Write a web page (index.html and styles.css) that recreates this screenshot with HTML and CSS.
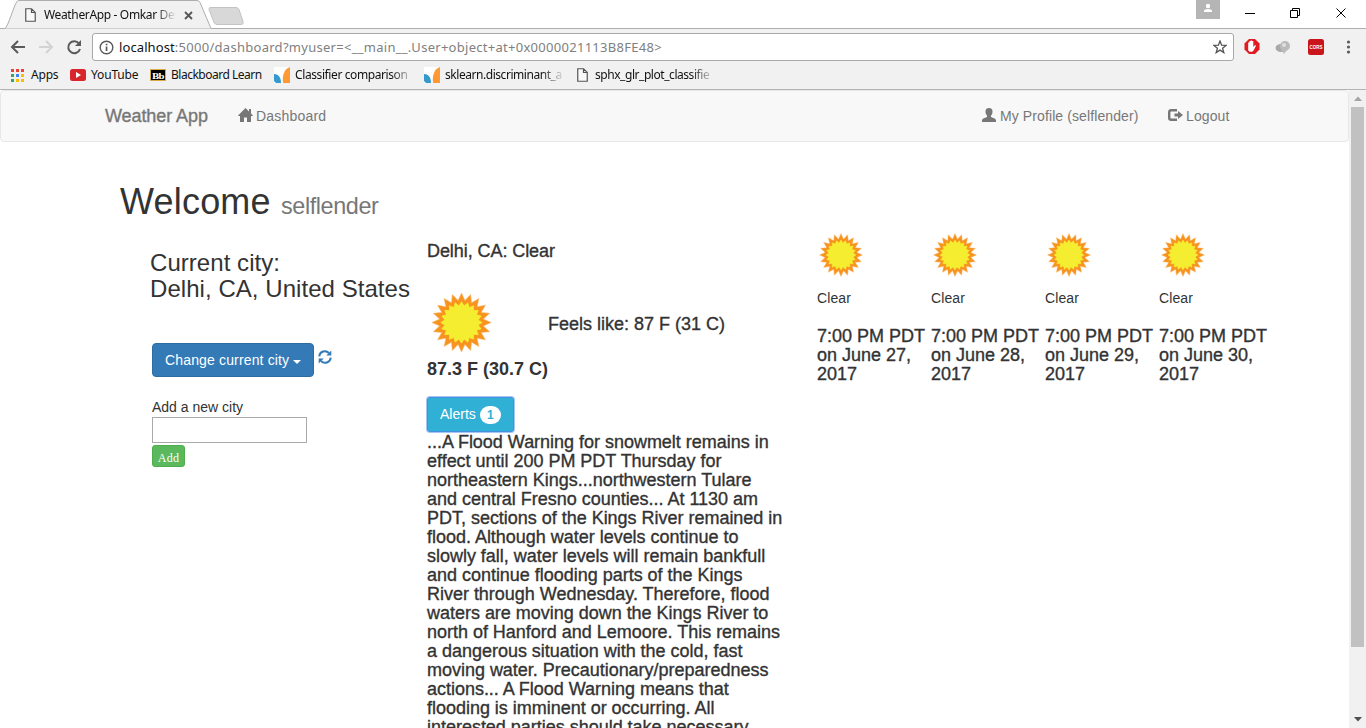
FILE: index.html
```html
<!DOCTYPE html>
<html lang="en">
<head>
<meta charset="utf-8">
<title>WeatherApp</title>
<link rel="stylesheet" href="styles.css">
</head>
<body>
<svg class="defs" width="0" height="0">
  <symbol id="sun" viewBox="-35 -35 70 70">
    <polygon fill="#f7931e" stroke="#fbb867" stroke-width=".6" points="30,0 22.2,3.5 28.5,9.3 20,10.2 24.3,17.6 15.9,15.9 17.6,24.3 10.2,20 9.3,28.5 3.5,22.2 0,30 -3.5,22.2 -9.3,28.5 -10.2,20 -17.6,24.3 -15.9,15.9 -24.3,17.6 -20,10.2 -28.5,9.3 -22.2,3.5 -30,0 -22.2,-3.5 -28.5,-9.3 -20,-10.2 -24.3,-17.6 -15.9,-15.9 -17.6,-24.3 -10.2,-20 -9.3,-28.5 -3.5,-22.2 0,-30 3.5,-22.2 9.3,-28.5 10.2,-20 17.6,-24.3 15.9,-15.9 24.3,-17.6 20,-10.2 28.5,-9.3 22.2,-3.5"/>
    <polygon fill="#f5ee30" stroke="#f5ee30" stroke-width="1" stroke-linejoin="round" transform="scale(.7)" points="30,0 24.2,3.8 28.5,9.3 21.8,11.1 24.3,17.6 17.3,17.3 17.6,24.3 11.1,21.8 9.3,28.5 3.8,24.2 0,30 -3.8,24.2 -9.3,28.5 -11.1,21.8 -17.6,24.3 -17.3,17.3 -24.3,17.6 -21.8,11.1 -28.5,9.3 -24.2,3.8 -30,0 -24.2,-3.8 -28.5,-9.3 -21.8,-11.1 -24.3,-17.6 -17.3,-17.3 -17.6,-24.3 -11.1,-21.8 -9.3,-28.5 -3.8,-24.2 0,-30 3.8,-24.2 9.3,-28.5 11.1,-21.8 17.6,-24.3 17.3,-17.3 24.3,-17.6 21.8,-11.1 28.5,-9.3 24.2,-3.8"/>
  </symbol>
  <symbol id="page" viewBox="0 0 11 14"><path d="M.75.75h5.8l3.7 3.7v8.8H.75zM6.5.75V4.5h3.7" fill="#fff" fill-opacity=".6" stroke="#555" stroke-width="1.2"/></symbol>
  <symbol id="sk" viewBox="0 0 16 16"><path d="M0 0h16v16H0z" fill="#fff"/><path d="M0 7c4 0 7 3 7 9H2L0 14z" fill="#3499cd"/><path d="M16 0v16H9C8 9 10 2 16 0z" fill="#ff9933"/></symbol>
</svg>

<header class="browser">
  <div class="tabstrip">
    <svg class="tab-shape" width="250" height="29"><path d="M0 28.5h5C8 27 14 5 17 1.500Q17.500.5 19 .5H197q2 0 3 2L211 28.500" fill="#f1f1f1" stroke="#aeaeae"/><path d="M0 28.500h5M211 28.500h39" stroke="#aeaeae"/><path d="M210 7.500h26q2 0 3 2l4 12q1 3-2 3h-24q-2 0-3-2l-5-13q0-2 1-2z" fill="#d8d8d8" stroke="#c3c3c3"/></svg>
    <div class="tab"><svg width="11" height="14"><use href="#page"/></svg><span class="tab-title">WeatherApp - Omkar Des</span><svg class="close" width="9" height="9" viewBox="0 0 9 9"><path d="M1 1l7 7M8 1L1 8" stroke="#555" stroke-width="1.8"/></svg></div>
    <div class="window-controls">
      <svg width="24" height="19"><path d="M0 0h24v19H0z" fill="#b5b5b5"/><circle cx="12" cy="6" r="2.200" fill="#fff"/><path d="M8 12V11q0-2 4-2t4 2v1z" fill="#fff"/></svg>
      <svg width="146" height="28" fill="none" stroke="#000"><path d="M25 13.500h10M70.500 10.500h7v7h-7zM72.500 10.500v-2h7v7h-2M116.500 8.500l9 9M125.500 8.500l-9 9"/></svg>
    </div>
  </div>
  <div class="toolbar">
    <svg class="navicons" width="92" height="34" fill="none" stroke-width="2"><path d="M25 18H12m6-6l-6 6 6 6" stroke="#5a5a5a"/><path d="M39 18h13m-6-6l6 6-6 6" stroke="#d3d3d3"/><path d="M79 14.500A6 6 0 1 0 80 20" stroke="#5a5a5a"/><path d="M81 11v6h-6z" fill="#5a5a5a"/></svg>
    <div class="address">
      <svg width="15" height="15" viewBox="0 0 15 15"><circle cx="7.500" cy="7.500" r="6.300" fill="none" stroke="#5a5a5a" stroke-width="1.400"/><path d="M6.700 6.500h1.700V11H6.700zM6.700 3.700h1.700v1.500H6.700z" fill="#5a5a5a"/></svg>
      <span class="url"><b>localhost</b>:5000/dashboard?myuser=&lt;__main__.User+object+at+0x0000021113B8FE48&gt;</span>
      <svg class="star" width="14" height="14" viewBox="0 0 14 14"><path d="M7 1l1.600 4.200 4.400.2-3.400 2.800 1.200 4.400L7 10.100l-3.800 2.500 1.200-4.400L1 5.400l4.400-.2z" fill="none" stroke="#555" stroke-width="1.300"/></svg>
    </div>
    <svg class="extensions" width="132" height="34">
      <path d="M15 10h6l4.500 4.500v6L21 25h-6l-4.500-4.500v-6z" fill="#e21b22"/><path d="M14.200 18v-4.500h1.200V17v-5h1.300v5-5.500h1.300V17v-5h1.300v6l1.700-2 1 .8-2.300 4.500-1.500 1.400h-2.700l-1.300-1.500z" fill="#fff"/>
      <ellipse cx="47" cy="19" rx="5.500" ry="4" fill="#a9a9a9"/><path d="M50 25c-1-3-4-4-4-8a5 5 0 0 1 10 0c0 4-4 4-6 8z" fill="#bbb"/><circle cx="50" cy="16" r="2" fill="#e0e0e0"/>
      <rect x="74" y="10" width="16" height="16" rx="2.500" fill="#c9151b"/><text x="75.500" y="20" class="cors" textLength="13" lengthAdjust="spacingAndGlyphs">CORS</text>
      <g fill="#5a5a5a"><circle cx="114.500" cy="13" r="1.600"/><circle cx="114.500" cy="18" r="1.600"/><circle cx="114.500" cy="23" r="1.600"/></g>
    </svg>
  </div>
  <nav class="bookmarks">
    <a class="bm apps"><svg width="13" height="13"><path d="M0 0h3v3H0zM5 0h3v3H5zM10 0h3v3h-3z" fill="#ea4335"/><path d="M0 5h3v3H0zM0 10h3v3H0z" fill="#34a853"/><path d="M5 5h3v3H5z" fill="#4285f4"/><path d="M10 5h3v3h-3zM5 10h3v3H5zM10 10h3v3h-3z" fill="#fbbc05"/></svg><span>Apps</span></a>
    <a class="bm yt"><svg width="16" height="12"><rect width="16" height="12" rx="2.500" fill="#d8262b"/><path d="M6 3l5 3-5 3z" fill="#fff"/></svg><span>YouTube</span></a>
    <a class="bm bb"><svg width="16" height="12"><path d="M.5.5h15v11H.5z" fill="#000" stroke="#d9ab45"/><text x="2" y="9.500" class="bbt" textLength="12" lengthAdjust="spacingAndGlyphs">Bb</text></svg><span>Blackboard Learn</span></a>
    <a class="bm cc"><svg width="16" height="16"><use href="#sk"/></svg><span class="fade">Classifier comparison</span></a>
    <a class="bm sd"><svg width="16" height="16"><use href="#sk"/></svg><span class="fade">sklearn.discriminant_a</span></a>
    <a class="bm sp"><svg width="11" height="14"><use href="#page"/></svg><span class="fade">sphx_glr_plot_classifie</span></a>
  </nav>
</header>

<div class="viewport">
  <div class="document">
    <nav class="navbar">
      <a class="brand">Weather App</a>
      <a class="navlink dash"><svg width="15" height="14" viewBox="0 0 15 14"><path d="M7.500 0L11 3.500V1h2v4.500L15 7.500l-.6.6H13V14H9V9.500H6V14H2V8.100H.6L0 7.500z" fill="#777"/></svg><span>Dashboard</span></a>
      <a class="navlink profile"><svg width="14" height="14" viewBox="0 0 14 14"><path d="M7 0c2.500 0 3.500 1.500 3.500 3.500 0 2-.5 3-1.500 4v1.500c2 1 5 1.300 5 3.500V14H0v-1.500c0-2.200 3-2.500 5-3.500V7.500c-1-1-1.500-2-1.500-4C3.500 1.500 4.500 0 7 0z" fill="#777"/></svg><span>My Profile (selflender)</span></a>
      <a class="navlink logout"><svg width="15" height="14" viewBox="0 0 15 14"><path d="M9 2.200H3.200q-2 0-2 2v5.600q0 2 2 2H9" fill="none" stroke="#777" stroke-width="2.400"/><path d="M6.500 5.500H10V3L15 7l-5 4V8.500H6.500z" fill="#777"/></svg><span>Logout</span></a>
    </nav>
    <h1>Welcome <small>selflender</small></h1>
    <main class="columns">
      <section class="city">
        <h3>Current city:<br>Delhi, CA, United States</h3>
        <div class="change"><button class="btn primary"><span>Change current city</span><i class="caret"></i></button><svg width="14" height="14" viewBox="0 0 14 14"><path d="M1.200 6.300A5.700 5.700 0 0 1 11 3M12.800 7.700A5.700 5.700 0 0 1 3 11" fill="none" stroke="#337ab7" stroke-width="1.900"/><path d="M13.300.5v5H8.300zM.7 13.500v-5h5z" fill="#337ab7"/></svg></div>
        <label class="add-label">Add a new city</label>
        <input class="field" type="text">
        <button class="add">Add</button>
      </section>
      <section class="current">
        <h4 class="place">Delhi, CA: Clear</h4>
        <div class="now"><svg width="69" height="69"><use href="#sun"/></svg><h4 class="feels">Feels like: 87 F (31 C)</h4></div>
        <p class="temp">87.3 F (30.7 C)</p>
        <button class="btn alerts"><span>Alerts</span><span class="badge">1</span></button>
        <h4 class="warning">...A Flood Warning for snowmelt remains in<br>effect until 200 PM PDT Thursday for<br>northeastern Kings...northwestern Tulare<br>and central Fresno counties... At 1130 am<br>PDT, sections of the Kings River remained in<br>flood. Although water levels continue to<br>slowly fall, water levels will remain bankfull<br>and continue flooding parts of the Kings<br>River through Wednesday. Therefore, flood<br>waters are moving down the Kings River to<br>north of Hanford and Lemoore. This remains<br>a dangerous situation with the cold, fast<br>moving water. Precautionary/preparedness<br>actions... A Flood Warning means that<br>flooding is imminent or occurring. All<br>interested parties should take necessary</h4>
      </section>
      <section class="forecast">
        <div class="day"><svg width="50" height="50"><use href="#sun"/></svg><p>Clear</p><h4>7:00 PM PDT<br>on June 27,<br>2017</h4></div>
        <div class="day"><svg width="50" height="50"><use href="#sun"/></svg><p>Clear</p><h4>7:00 PM PDT<br>on June 28,<br>2017</h4></div>
        <div class="day"><svg width="50" height="50"><use href="#sun"/></svg><p>Clear</p><h4>7:00 PM PDT<br>on June 29,<br>2017</h4></div>
        <div class="day"><svg width="50" height="50"><use href="#sun"/></svg><p>Clear</p><h4>7:00 PM PDT<br>on June 30,<br>2017</h4></div>
      </section>
    </main>
  </div>
  <aside class="scrollbar"><svg width="17" height="17"><path d="M5 11l4-4.500 4 4.500z" fill="#a3a3a3"/></svg><div class="thumb"></div><svg class="down" width="17" height="17"><path d="M5 6h8l-4 4.500z" fill="#505050"/></svg></aside>
</div>
</body>
</html>
```
FILE: styles.css
```css
* { box-sizing: border-box; }
html, body { margin: 0; height: 728px; overflow: hidden; background: #fff; }
body { font: 14px/20px "Liberation Sans", Arial, sans-serif; color: #333; display: flex; flex-direction: column; }
svg { display: block; flex: none; }
.defs { position: absolute; }
h1, h3, h4, p { margin: 0; font-weight: 400; white-space: nowrap; }

.browser { flex: none; height: 90px; background: #f1f1f1; border-bottom: 1px solid #b4b4b4; font: 12px/16px "Noto Sans", "Open Sans", sans-serif; color: #111; }
.tabstrip { position: relative; height: 29px; background: #fff; border-bottom: 1px solid #aeaeae; display: flex; justify-content: space-between; }
.tab-shape { position: absolute; left: 0; top: 0; }
.tab { position: relative; display: flex; align-items: center; height: 30px; padding-left: 25px; }
.tab-title { width: 134px; margin-left: 8px; white-space: nowrap; letter-spacing: -.35px; -webkit-mask-image: linear-gradient(90deg, #000 112px, transparent 132px); }
.close { margin-left: 6px; }
.window-controls { display: flex; }
.toolbar { display: flex; height: 34px; }
.address { width: 1142px; height: 28px; margin-top: 4px; border: 1px solid #a9a9a9; border-radius: 3px; background: #fff; display: flex; align-items: center; padding: 0 6px; }
.url { margin-left: 5px; font-size: 13px; color: #808080; white-space: nowrap; letter-spacing: .28px; }
.url b { font-weight: 400; color: #111; letter-spacing: .1px; }
.star { margin-left: auto; }
.cors { font: bold 6px "Liberation Sans", sans-serif; fill: #fff; }
.bbt { font: bold 9px "Liberation Serif", serif; fill: #fff; }
.bookmarks { display: flex; height: 24px; padding-left: 11px; }
.bm { display: flex; align-items: center; gap: 7px; height: 24px; white-space: nowrap; }
.apps { width: 59px; letter-spacing: -.2px; }
.yt { width: 80px; gap: 5px; letter-spacing: -.15px; }
.bb { width: 124px; gap: 5px; letter-spacing: -.5px; }
.cc { width: 150px; gap: 5px; letter-spacing: -.4px; }
.sd { width: 153px; gap: 5px; letter-spacing: -.45px; }
.sp { letter-spacing: -.45px; }
.fade { width: 120px; -webkit-mask-image: linear-gradient(90deg, #000 96px, transparent 120px); }

.viewport { display: flex; height: 638px; overflow: hidden; }
.document { width: 1349px; }
.scrollbar { width: 17px; background: #f1f1f1; display: flex; flex-direction: column; }
.thumb { width: 13px; height: 540px; margin-left: 2px; background: #c1c1c1; }
.down { margin-top: auto; }

.navbar { height: 52px; border: 1px solid #e7e7e7; border-radius: 4px; background: #f8f8f8; color: #777; display: flex; align-items: center; padding-left: 104px; }
.brand { width: 133px; font-size: 18px; letter-spacing: -.08px; -webkit-text-stroke: .35px #777; }
.navlink { display: flex; align-items: center; gap: 3px; white-space: nowrap; letter-spacing: .1px; }
.navlink svg { margin-top: -2px; }
.dash { width: 744px; letter-spacing: .2px; }
.profile { width: 186px; gap: 4px; }
h1 { height: 40px; margin: 40px 0 0 120px; font-size: 36px; line-height: 40px; letter-spacing: .2px; }
h1 small { font-size: 23.4px; color: #777; letter-spacing: -.4px; }

.columns { display: flex; padding-left: 150px; }
.city { width: 277px; padding-top: 28px; display: flex; flex-direction: column; align-items: flex-start; }
h3 { font-size: 24px; line-height: 26px; letter-spacing: .05px; }
.change { display: flex; margin: 41px 0 0 2px; gap: 4px; }
.change svg { margin-top: 7px; }
.btn { font: 14px/20px "Liberation Sans", Arial, sans-serif; color: #fff; border-radius: 4px; padding: 6px 12px; display: flex; align-items: center; white-space: nowrap; }
.primary { width: 162px; height: 34px; background: #337ab7; border: 1px solid #2e6da4; gap: 4px; letter-spacing: .15px; }
.caret { border: 4px solid transparent; border-top-color: #fff; border-bottom: 0; margin-top: 3px; }
.add-label { margin: 20px 0 0 2px; }
.field { width: 155px; height: 26px; margin: 0 0 0 2px; border: 1px solid #a9a9a9; background: #fff; }
.add { width: 33px; height: 22px; margin: 2px 0 0 2px; padding: 3px 0 0; border: 1px solid #4cae4c; border-radius: 3px; background: #5cb85c; color: #fff; font: 12px/16px "Liberation Serif", serif; letter-spacing: .3px; }
h4 { font-size: 18px; line-height: 19px; -webkit-text-stroke: .35px #333; }
.current { width: 390px; padding-top: 20px; }
.place { letter-spacing: -.07px; }
.now { display: flex; align-items: center; height: 69px; margin-top: 27px; }
.feels { margin: 3px 0 0 52px; }
.temp { font-size: 18px; line-height: 20px; font-weight: 700; margin-top: 2px; }
.alerts { width: 87px; height: 35px; margin: 18px 0 0; padding: 5px 12px 7px; background: #31b0d5; border: 1px solid #4391e0; box-shadow: 0 0 0 1px #a5c6f5; border-radius: 3px; gap: 4px; }
.badge { width: 21px; height: 18px; margin-top: 2px; border-radius: 10px; background: #fff; color: #31b0d5; font: bold 12px/18px "Liberation Sans", sans-serif; text-align: center; }
.warning { margin-top: 1px; letter-spacing: -.02px; }
.forecast { display: flex; padding-top: 8px; }
.day { width: 114px; }
.day svg { margin-left: -1px; }
.day p { margin: 8px 0 19px; letter-spacing: .1px; }
```
